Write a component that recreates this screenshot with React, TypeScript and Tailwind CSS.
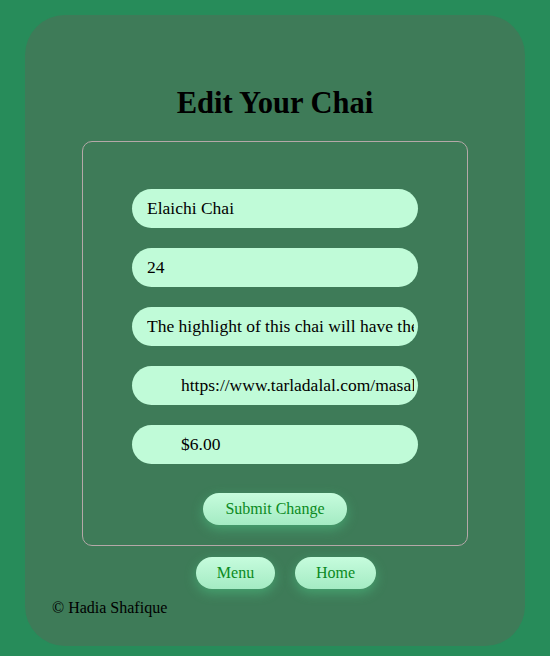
import React, { useState } from 'react';

const serif = "font-['Liberation_Serif','Times_New_Roman',serif]";

const App: React.FC = () => {
  const [name, setName] = useState('Elaichi Chai');
  const [qty, setQty] = useState('24');
  const [desc, setDesc] = useState('The highlight of this chai will have the flavour of cardamom');
  const [url, setUrl] = useState('https://www.tarladalal.com/masala-chai');
  const [price, setPrice] = useState('$6.00');

  const inputCls =
    'w-[286px] h-[39px] rounded-full bg-[#c0fbd8] text-black text-[17.5px] outline-none border-0 pr-[4px] ' + serif;
  const btnCls =
    'h-[32px] rounded-full bg-gradient-to-b from-[#c6fcdd] to-[#a4ebc3] text-[#0b8a22] text-[16px] shadow-[0_4px_12px_rgba(80,210,140,0.45)] ' +
    serif;

  return (
    <div className="min-h-[656px] bg-[#278c5a] pt-[15px] pb-[10px]">
      <div className={`mx-auto w-[500px] h-[631px] rounded-[40px] bg-[#3e7b58] pt-[70px] ${serif}`}>
        <h1 className="text-center text-[30.5px] leading-[36px] font-bold text-black">Edit Your Chai</h1>

        <form
          className="mx-auto mt-[20px] w-[386px] rounded-[10px] border border-[#b4a8a8] pt-[47px] pb-[20px] flex flex-col items-center"
          onSubmit={(e) => e.preventDefault()}
        >
          <div className="flex flex-col gap-[20px]">
            <input className={`${inputCls} pl-[15px]`} value={name} onChange={(e) => setName(e.target.value)} />
            <input className={`${inputCls} pl-[15px]`} value={qty} onChange={(e) => setQty(e.target.value)} />
            <input className={`${inputCls} pl-[15px]`} value={desc} onChange={(e) => setDesc(e.target.value)} />
            <input className={`${inputCls} pl-[49px]`} value={url} onChange={(e) => setUrl(e.target.value)} />
            <input className={`${inputCls} pl-[49px]`} value={price} onChange={(e) => setPrice(e.target.value)} />
          </div>
          <button type="submit" className={`${btnCls} mt-[29px] w-[144px]`}>
            Submit Change
          </button>
        </form>

        <div className="mt-[11px] flex justify-center gap-[20px] pl-[22px]">
          <button className={`${btnCls} w-[79px]`}>Menu</button>
          <button className={`${btnCls} w-[81px]`}>Home</button>
        </div>

        <p className="mt-[10px] pl-[27px] text-[16px] leading-[18px] text-black">© Hadia Shafique</p>
      </div>
    </div>
  );
};

export default App;
